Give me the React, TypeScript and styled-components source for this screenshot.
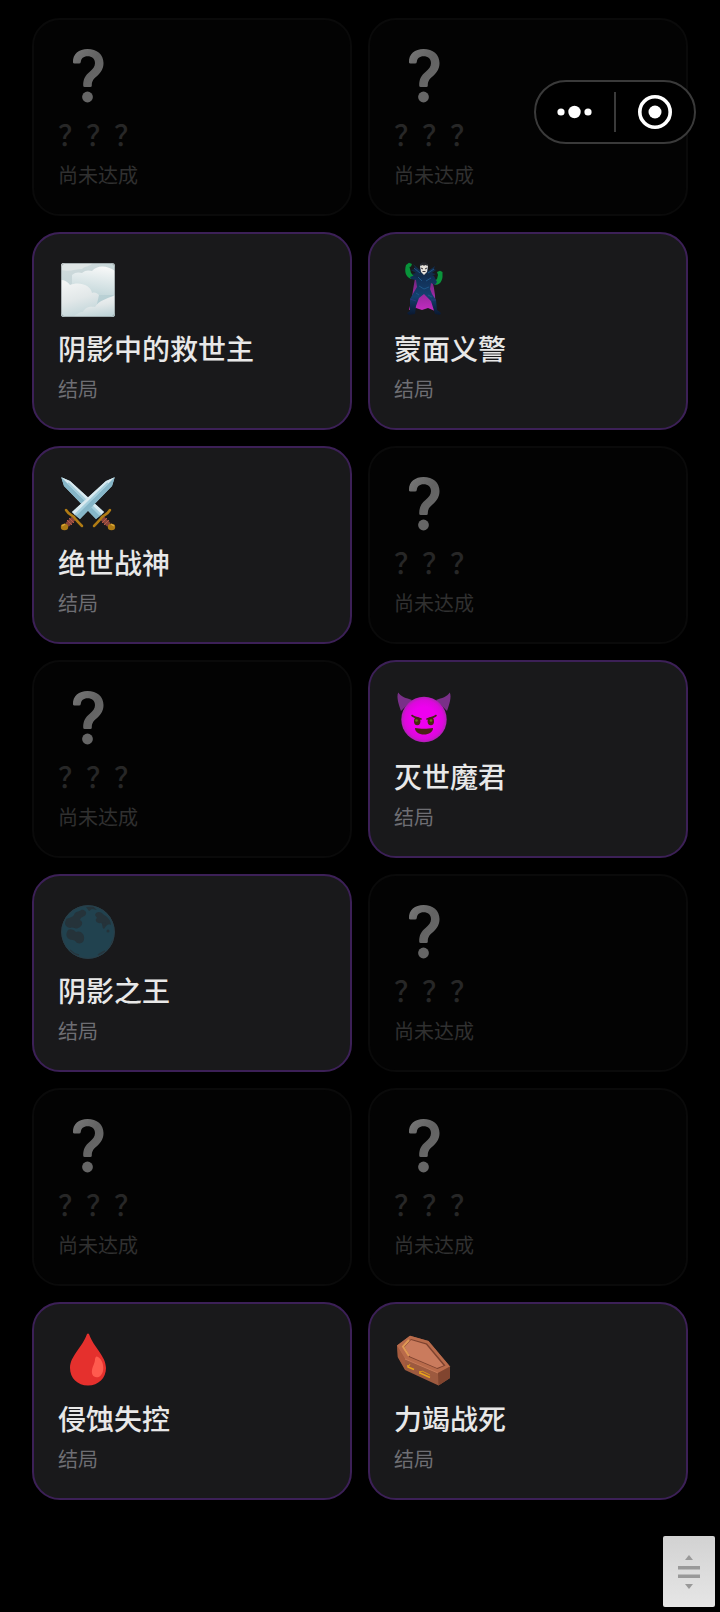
import React from "react";
import styled, { createGlobalStyle, css } from "styled-components";

type IconName = "fog" | "vampire" | "swords" | "devil" | "moon" | "blood" | "coffin";

interface Ending {
  id: number;
  title?: string;
  icon?: IconName;
}

const endings: Ending[] = [
  { id: 1 },
  { id: 2 },
  { id: 3, title: "阴影中的救世主", icon: "fog" },
  { id: 4, title: "蒙面义警", icon: "vampire" },
  { id: 5, title: "绝世战神", icon: "swords" },
  { id: 6 },
  { id: 7 },
  { id: 8, title: "灭世魔君", icon: "devil" },
  { id: 9, title: "阴影之王", icon: "moon" },
  { id: 10 },
  { id: 11 },
  { id: 12 },
  { id: 13, title: "侵蚀失控", icon: "blood" },
  { id: 14, title: "力竭战死", icon: "coffin" },
];

const QuestionIcon = () => (
  <>
    <defs>
      <linearGradient id="question" x1="0" y1="0" x2="1" y2="1">
        <stop offset="0" stopColor="#787878" />
        <stop offset="0.5" stopColor="#626262" />
        <stop offset="1" stopColor="#6c6c6c" />
      </linearGradient>
    </defs>
    <path
      d="M15 18.500C14.500 10 21 5 29.500 5C39 5 45.500 10.500 45.500 19C45.500 25 42.500 29 38.500 32.500C35 35.500 33.800 37.500 33.800 41.500Q33.800 43 32.300 43H26.700Q25.200 43 25.200 41.500C25.200 34.500 27.500 31.500 31.500 28C35 25 37 22.500 37 19.200C37 14.800 34 12.300 29.500 12.300C25.500 12.300 23.200 14.500 22.800 18Q22.600 19.500 21 19.500H16.500Q15.100 19.500 15 18.500Z"
      fill="url(#question)"
    />
    <circle cx="29.500" cy="53" r="5.400" fill="#666" />
  </>
);

const FogIcon = () => (
  <>
    <defs>
      <linearGradient id="fog-sky" x1="0" y1="0" x2="0.300" y2="1">
        <stop offset="0" stopColor="#d3dcdd" />
        <stop offset="1" stopColor="#b2cdd2" />
      </linearGradient>
      <linearGradient id="fog-a" x1="0.600" y1="0" x2="0.400" y2="1">
        <stop offset="0" stopColor="#f7f8f8" />
        <stop offset="1" stopColor="#c3d7da" />
      </linearGradient>
      <linearGradient id="fog-b" x1="0.300" y1="0" x2="0.600" y2="1">
        <stop offset="0" stopColor="#f3f5f5" />
        <stop offset="0.500" stopColor="#e2e8e9" />
        <stop offset="1" stopColor="#bfd4d8" />
      </linearGradient>
      <clipPath id="fog-clip">
        <rect x="3" y="5" width="54" height="54" rx="3" />
      </clipPath>
    </defs>
    <g clipPath="url(#fog-clip)">
      <rect x="3" y="5" width="54" height="54" fill="url(#fog-sky)" />
      <path d="M3 5H35C31 9 27 8 24 11C18 11 12 14 3 12Z" fill="#dfe5e5" />
      <path d="M14 17C17 14 21 14 24 15C27 12 31 12 34 13C39 7 49 7 57 13V37H14Z" fill="url(#fog-a)" />
      <path d="M3 22C7 22 10 24 12 27C21 23 33 27 34 35C37 34 39 35 41 37L36 59H3Z" fill="url(#fog-b)" />
      <path d="M15 59C20 55 22 54 25 54C27 49 32 48 37 49C41 42 49 41 57 37V59Z" fill="url(#fog-b)" />
    </g>
    <rect x="3.500" y="5.500" width="53" height="53" rx="3" fill="none" stroke="#879092" strokeOpacity="0.600" />
  </>
);

const VampireIcon = () => (
  <>
    <defs>
      <linearGradient id="cape" x1="0" y1="0" x2="0" y2="1">
        <stop offset="0" stopColor="#70277c" />
        <stop offset="1" stopColor="#c32bc1" />
      </linearGradient>
      <linearGradient id="suit" x1="0" y1="0" x2="0" y2="1">
        <stop offset="0" stopColor="#102b50" />
        <stop offset="0.550" stopColor="#144170" />
        <stop offset="1" stopColor="#0a1830" />
      </linearGradient>
    </defs>
    <path d="M21 20C19 31 18 42 15 52L22 50L28 52L34 50L41 53C42 42 41 32 38 22Z" fill="url(#cape)" />
    <path d="M12 7L15 4.700L18 6L17 8.500L15.500 9L17 15L20 18L17 21C12 19 10 14 12 7Z" fill="#08933a" />
    <path d="M43 14L46 12.700L48.500 14V19C48 24 45 27 41 27L39 24L43 21L44 17Z" fill="#0a943b" />
    <path d="M16 19L21 17L27 16H34L40 18L43 24L41 27L37 25L36 31L38 36L42 42L43 52L47 55L46 57L41 56L37 43L30 36L25 40L22 48L21 56L15 57L13 55L16 53V41L20 34L23 29L22 22L17 21Z" fill="url(#suit)" />
    <path d="M19 6L26 12V7L29 4.500L34 7V13L41 8L40 11L42 12L38 15L42 16L34 20L30 18L25 21L18 16L22 15L17 12L22 11Z" fill="#122b4b" />
    <path d="M20 10L26 15M40 11L34 15M24 19L28 23M37 20L32 23M25 28L30 31L35 29M22 35L25 37M34 37L38 39" fill="none" stroke="#1e5687" strokeWidth="1" />
    <path d="M26 8C28 4 33 5 34 8L33 14L30 17L27 14Z" fill="#e5e0d9" />
    <path d="M26 8L28 4.500H32L34 8L31 7L30 8L29 7Z" fill="#24242a" />
    <path d="M27 10L29 11M33 10L31 11M28.500 13.500H31.500" stroke="#383238" strokeWidth="1" />
    <path d="M16 41L22 43M37 42L42 42" stroke="#29377a" strokeWidth="1" />
  </>
);

const Sword = () => (
  <>
    <path d="M56.700 5.300L54 14L22 47L14 40L48 9Z" fill="#a9d1df" />
    <path d="M56.700 5.300L48 9L14 40L17 43L51 12Z" fill="#d9eaf0" />
    <path d="M56.700 5.300L54 14L22 47L18 44Z" fill="#86b6c8" />
    <path d="M17 43L50 11" stroke="#a5cfdd" strokeWidth="2" />
    <path d="M16 46L9 53" stroke="#88443b" strokeWidth="5" />
    <path d="M11 46L16 51M9 48L14 53" stroke="#b75a46" strokeWidth="1" />
    <path d="M8 38C11 43 14 43 16 45C18 48 20 50 24 54" fill="none" stroke="#b17c14" strokeWidth="2.500" strokeLinecap="round" />
    <ellipse cx="6.500" cy="55" rx="3.700" ry="3.200" fill="#ad7a14" />
    <path d="M4 54L7 52" stroke="#d9a83a" strokeWidth="1.500" />
  </>
);

const SwordsIcon = () => (
  <>
    <g transform="matrix(-1 0 0 1 60 0)"><Sword /></g>
    <Sword />
  </>
);

const DevilIcon = () => (
  <>
    <defs>
      <radialGradient id="devil" cx="0.500" cy="0.500" r="0.500">
        <stop offset="0.550" stopColor="#ee00ef" />
        <stop offset="0.850" stopColor="#dc08dc" />
        <stop offset="1" stopColor="#ae22b3" />
      </radialGradient>
    </defs>
    <path d="M7 25C5 19 2 11 4.300 6.500C7 11 12 12 18 14Z" fill="#793088" />
    <path d="M53 25C55 19 58 11 55.700 6.500C53 11 48 12 42 14Z" fill="#793088" />
    <circle cx="30" cy="33.500" r="22.700" fill="url(#devil)" />
    <ellipse cx="23.200" cy="35.300" rx="3.200" ry="4" fill="#482a11" />
    <ellipse cx="36.800" cy="35.300" rx="3.200" ry="4" fill="#482a11" />
    <path d="M18 29.500C20 31 23 32 27 33M42 29.500C40 31 37 32 33 33" fill="none" stroke="#482318" strokeWidth="1.600" strokeLinecap="round" />
    <circle cx="22.500" cy="34.500" r="1.300" fill="#657817" />
    <circle cx="37" cy="34.500" r="1.300" fill="#657817" />
    <path d="M21 42C26 43 34 43 39 42C39 46 35 48.500 30 48.500C25 48.500 21 46 21 42Z" fill="#482315" />
  </>
);

const MoonIcon = () => (
  <>
    <circle cx="30" cy="32" r="26.700" fill="#21424f" />
    <g fill="#25333a">
      <path d="M16 15C17 11 21 12 23 10C25 9 29 11 28 14C27 17 23 16 22 20C26 22 24 27 20 28C18 30 15 26 12 28C7 27 6 23 8 20C9 17 13 19 16 15Z" />
      <path d="M9 32C10 28 15 29 18 32C22 30 27 34 26 39C26 43 21 45 18 42C16 39 14 41 11 39C8 37 8 34 9 32Z" />
      <path d="M37 15C38 11 43 11 46 15C50 17 53 21 53 25C50 23 48 26 46 29C43 27 46 25 43 23C39 24 36 20 39 18Z" />
      <path d="M28 7L35 6.500L39 10L34 9L31 11Z" />
      <circle cx="50" cy="31" r="1.500" />
      <circle cx="46" cy="24" r="2" />
    </g>
    <path d="M12 50L17 54L21 55M40 55L47 51M53 45L55 40" fill="none" stroke="#26353d" strokeWidth="1.500" />
    <circle cx="30" cy="32" r="26.300" fill="none" stroke="#2a3e48" strokeWidth="1" />
  </>
);

const BloodIcon = () => (
  <>
    <path d="M28.800 6.500Q30 4.500 31.200 6.500C36 20 48 28 48 40C48 50 40.500 57.500 30 57.500C19.500 57.500 12 50 12 40C12 28 24 20 28.800 6.500Z" fill="#e5302d" />
    <path d="M39 28.500C43 30 45.300 35 45.300 40C45.300 46 42 49.500 38.500 49.300C35 49 33.300 46 34 42C35 37 37 35 37 31Q37.500 28 39 28.500Z" fill="#ff5b4e" />
  </>
);

const CoffinIcon = () => (
  <>
    <path d="M16 7.700L34.500 13L56 38.500V50L44.500 57.500L11 42L3.700 29L3 17.500Z" fill="#9d5a3f" />
    <path d="M16 7.700L34.500 13L56 38.500L44 45L11 31L3 17.500Z" fill="#b96b4b" />
    <path d="M17 11L33 15.500L51.500 37.500L43.500 41L15 29L9.500 19Z" fill="#7d422f" />
    <path d="M17 12L32 16.500L49.500 37.500L43 40L16 28.500L10.500 19Z" fill="#ca7b5d" />
    <path d="M3.500 19L11 31V41L4 29Z" fill="#a65b3e" />
    <path d="M44 45L56 38.500V50L44.500 57.500Z" fill="#81452f" />
    <path d="M15 12L9 18.500L15 28" fill="none" stroke="#e09855" strokeWidth="2" />
    <path d="M11 31L44 45" stroke="#c87b5a" strokeWidth="1" />
    <path d="M14 37V39L20 41.500M26 43V45L36 49.500" fill="none" stroke="#e9a51b" strokeWidth="1.500" />
    <path d="M15 38L16 36M25 46L28 43M28 43L36 47" stroke="#d9951b" strokeWidth="1" />
  </>
);

const icons: Record<IconName, React.FC> = {
  fog: FogIcon,
  vampire: VampireIcon,
  swords: SwordsIcon,
  devil: DevilIcon,
  moon: MoonIcon,
  blood: BloodIcon,
  coffin: CoffinIcon,
};

const EndingCard: React.FC<{ ending: Ending }> = ({ ending }) => {
  const locked = !ending.icon;
  const Icon = ending.icon ? icons[ending.icon] : QuestionIcon;

  return (
    <Card $locked={locked}>
      <CardIcon viewBox="0 0 60 64" aria-hidden="true">
        <Icon />
      </CardIcon>
      <CardTitle $locked={locked}>{ending.title ?? "？？？"}</CardTitle>
      <CardNote $locked={locked}>{locked ? "尚未达成" : "结局"}</CardNote>
    </Card>
  );
};

const App: React.FC = () => (
  <>
    <GlobalStyle />
    <Page>
      <Grid>
        {endings.map((ending) => (
          <EndingCard key={ending.id} ending={ending} />
        ))}
      </Grid>
    </Page>
    <Capsule>
      <CapsuleButton type="button" aria-label="更多">
        <svg width="36" height="36" viewBox="0 0 36 36" fill="#fff">
          <circle cx="4" cy="18" r="3.600" />
          <circle cx="17.500" cy="18" r="6.200" />
          <circle cx="31" cy="18" r="3.600" />
        </svg>
      </CapsuleButton>
      <CapsuleDivider />
      <CapsuleButton type="button" aria-label="关闭">
        <svg width="36" height="36" viewBox="0 0 36 36">
          <circle cx="18" cy="18" r="15.200" fill="none" stroke="#fff" strokeWidth="3.600" />
          <circle cx="18" cy="18" r="6.500" fill="#fff" />
        </svg>
      </CapsuleButton>
    </Capsule>
    <ScrollHandle type="button" aria-label="滚动">
      <svg width="22" height="36" viewBox="0 0 22 36" fill="#999">
        <path d="M11 1L15 6H7Z" />
        <rect y="12" width="22" height="3.500" />
        <rect y="20.500" width="22" height="3.500" />
        <path d="M11 35L15 30H7Z" />
      </svg>
    </ScrollHandle>
  </>
);

const GlobalStyle = createGlobalStyle`
  * {
    box-sizing: border-box;
  }

  body {
    margin: 0;
    background: #000;
    font-family: "Noto Sans CJK SC", "Noto Sans", sans-serif;
  }

  button {
    padding: 0;
    border: 0;
    background: none;
    cursor: pointer;
  }

  svg {
    display: block;
  }
`;

const Page = styled.main`
  min-height: 100vh;
  padding: 18px 32px 112px;
`;

const Grid = styled.ul`
  display: grid;
  grid-template-columns: repeat(2, minmax(0, 1fr));
  gap: 16px;
  margin: 0;
  padding: 0;
  list-style: none;
`;

const Card = styled.li<{ $locked: boolean }>`
  display: flex;
  flex-direction: column;
  padding: 24px;
  border: 2px solid #3c2057;
  border-radius: 28px;
  background: #19191b;

  ${({ $locked }) =>
    $locked &&
    css`
      border-color: #0a0a0a;
      background: #030303;
    `}
`;

const CardIcon = styled.svg`
  width: 60px;
  height: 64px;
`;

const CardTitle = styled.h2<{ $locked: boolean }>`
  margin: 6px 0;
  color: ${({ $locked }) => ($locked ? "#272727" : "#e8e8e8")};
  font-size: 28px;
  font-weight: 500;
  line-height: 40px;
`;

const CardNote = styled.p<{ $locked: boolean }>`
  margin: 0;
  color: ${({ $locked }) => ($locked ? "#303030" : "#6e6e73")};
  font-size: 20px;
  line-height: 30px;
`;

/* Floats over the grid while it scrolls */
const Capsule = styled.div`
  position: fixed;
  top: 80px;
  right: 24px;
  display: flex;
  align-items: center;
  width: 162px;
  height: 64px;
  border: 2px solid #3a3a3a;
  border-radius: 32px;
  background: #000;
`;

const CapsuleButton = styled.button`
  display: flex;
  flex: 1;
  align-items: center;
  justify-content: center;
  height: 100%;
`;

const CapsuleDivider = styled.span`
  width: 2px;
  height: 40px;
  background: #3a3a3a;
`;

const ScrollHandle = styled.button`
  position: fixed;
  right: 5px;
  bottom: 5px;
  display: flex;
  align-items: center;
  justify-content: center;
  width: 52px;
  height: 71px;
  border-radius: 2px;

  && {
    background: linear-gradient(#d2d2d2, #e6e6e6);
  }
`;

export default App;
